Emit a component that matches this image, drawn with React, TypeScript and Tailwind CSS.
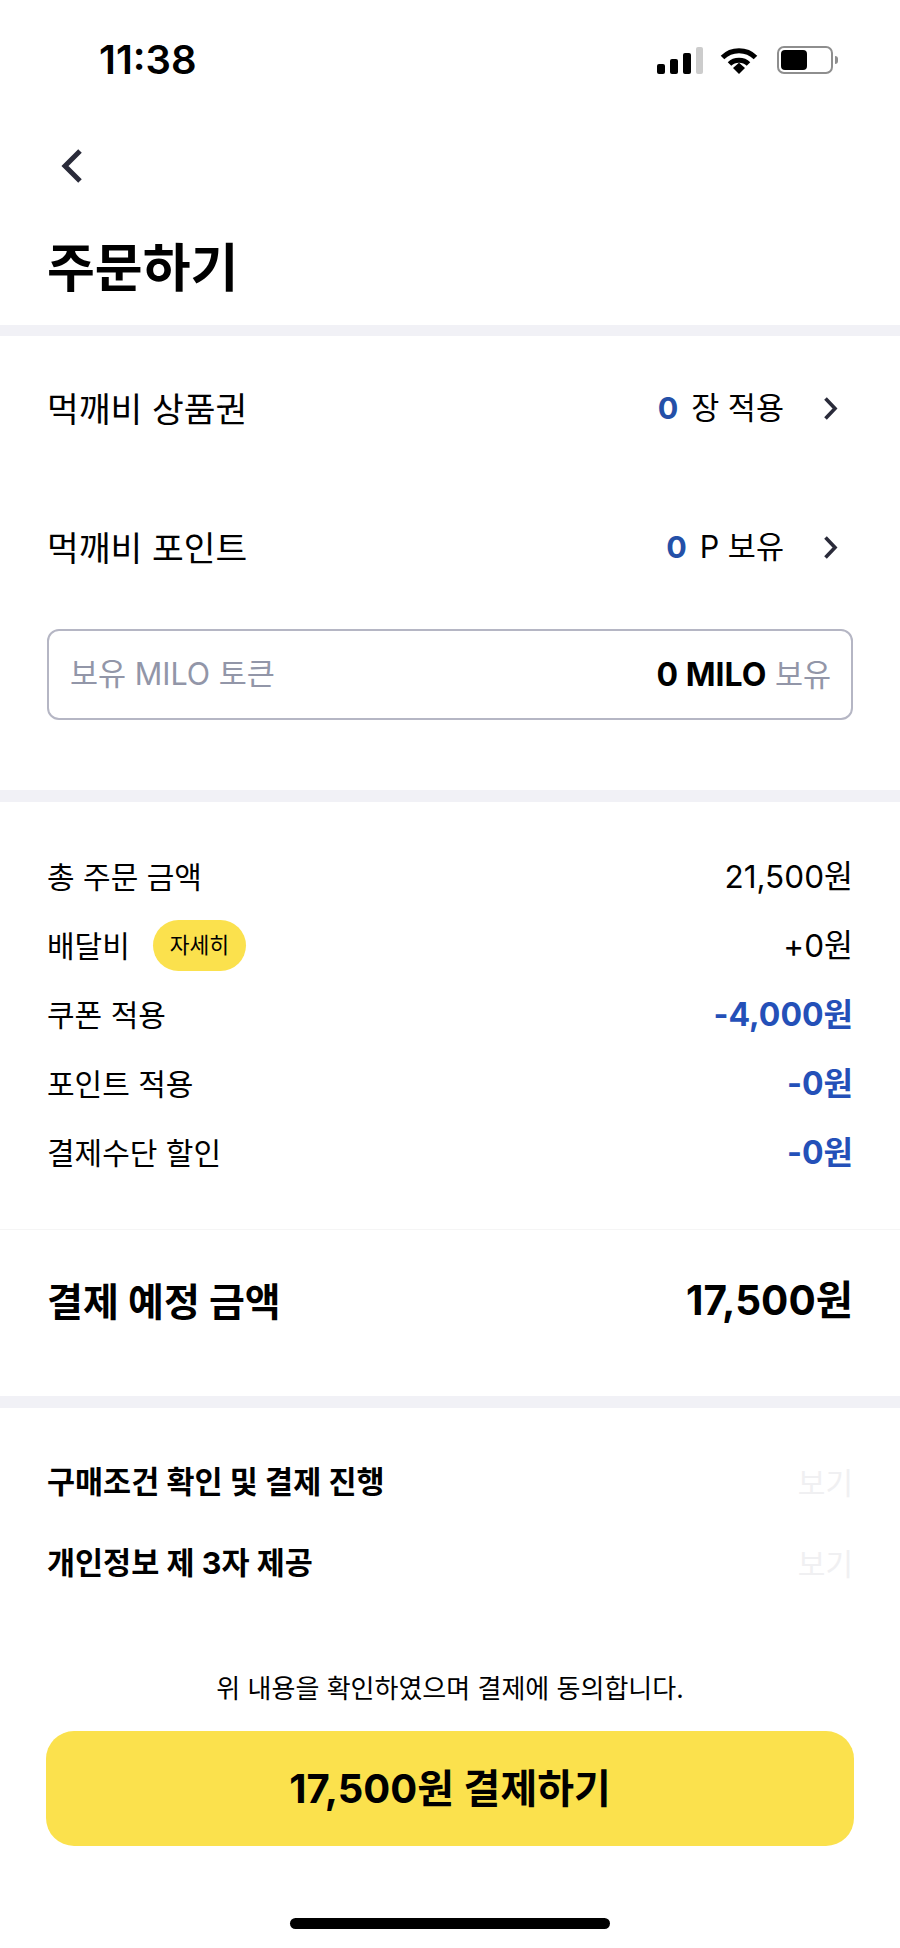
const font = "[font-family:Inter,'Noto_Sans_CJK_KR',sans-serif]"

const fees = [
  { label: '총 주문 금액', value: '21,500원' },
  { label: '배달비', value: '+0원', badge: true },
  { label: '쿠폰 적용', value: '-4,000원', discount: true },
  { label: '포인트 적용', value: '-0원', discount: true },
  { label: '결제수단 할인', value: '-0원', discount: true },
]

function ChevronRight() {
  return (
    <svg width="15" height="25" viewBox="0 0 15 25" fill="none">
      <path d="M2.5 2.5 12 12.5 2.5 22.5" stroke="#2a2b3a" strokeWidth="3.6" />
    </svg>
  )
}

function Divider() {
  return <div className="h-[11px] bg-[#f1f1f6]" />
}

function StatusBar() {
  return (
    <div className="flex h-[120px] items-center justify-between pl-[99px] pr-[62px]">
      <span className="text-[40px] leading-none font-semibold text-black">11:38</span>
      <div className="flex items-center">
        {/* signal */}
        <div className="flex h-[27px] items-end gap-[5px]">
          <div className="h-[10px] w-[8px] rounded-[2px] bg-black" />
          <div className="h-[15px] w-[8px] rounded-[2px] bg-black" />
          <div className="h-[21px] w-[8px] rounded-[2px] bg-black" />
          <div className="h-[27px] w-[7px] rounded-[2px] bg-[#cccccc]" />
        </div>
        {/* wifi */}
        <svg className="mr-[19px] ml-[17px]" width="38" height="27" viewBox="0 0 38 27" fill="none">
          <path d="M2.5 10.5C11.5 1.5 26.5 1.5 35.5 10.5" stroke="#000" strokeWidth="5" />
          <path d="M9.5 17C14.5 12 23.5 12 28.5 17" stroke="#000" strokeWidth="5" />
          <path d="M13 21 19 15.8 25 21 19 27Z" fill="#000" />
        </svg>
        {/* battery */}
        <div className="flex items-center gap-[2px]">
          <div className="h-[28px] w-[56px] rounded-[7px] border-[2px] border-[#8e8e8e] p-[2px]">
            <div className="h-full w-[26px] rounded-[4px] bg-black" />
          </div>
          <div className="h-[8px] w-[3px] rounded-r-full bg-[#8e8e8e]" />
        </div>
      </div>
    </div>
  )
}

export default function App() {
  return (
    <div className={`flex h-[1948px] w-[900px] flex-col bg-white text-black ${font}`}>
      <StatusBar />

      <div className="flex h-[92px] items-center pl-[60px]">
        <svg width="24" height="36" viewBox="0 0 24 36" fill="none">
          <path d="M20 3 5 18 20 33" stroke="#2a2b3a" strokeWidth="5" />
        </svg>
      </div>
      <div className="flex h-[113px] items-center px-[47px]">
        <h1 className="text-[52px] leading-none font-bold">주문하기</h1>
      </div>

      <Divider />

      <section className="px-[47px] pt-[3px]">
        <div className="flex h-[139px] items-center justify-between">
          <span className="mt-[3px] text-[34.5px] leading-none">먹깨비 상품권</span>
          <div className="flex items-center gap-[39px] pr-[15px]">
            <span className="flex items-center gap-[13px] text-[30.5px] leading-none">
              <b className="font-bold text-[#2450a8]">0</b>
              <span>장 적용</span>
            </span>
            <ChevronRight />
          </div>
        </div>
        <div className="flex h-[139px] items-center justify-between">
          <span className="mt-[3px] text-[34.5px] leading-none">먹깨비 포인트</span>
          <div className="flex items-center gap-[39px] pr-[15px]">
            <span className="flex items-center gap-[13px] text-[30.5px] leading-none">
              <b className="font-bold text-[#2450a8]">0</b>
              <span>P 보유</span>
            </span>
            <ChevronRight />
          </div>
        </div>
        <div className="mt-[12px] flex h-[91px] items-center justify-between rounded-[12px] border-2 border-[#b5b6c4] pl-[21px] pr-[20px] text-[30.5px] leading-none">
          <span className="text-[#9296a8]">보유 MILO 토큰</span>
          <span className="text-[#9296a8]">
            <b className="text-[32px] font-bold text-black">0 MILO</b> 보유
          </span>
        </div>
      </section>
      <div className="h-[70px]" />

      <div className="h-[12px] bg-[#f1f1f6]" />

      <section className="px-[47px] pt-[40px] pb-[42px]">
        {fees.map((row) => (
          <div key={row.label} className="flex h-[69px] items-center justify-between text-[30px] leading-none">
            <div className="flex items-center gap-[23px]">
              <span>{row.label}</span>
              {row.badge && (
                <span className="flex h-[51px] w-[93px] items-center justify-center rounded-full bg-[#fbe14d] text-[21.5px] leading-none">
                  자세히
                </span>
              )}
            </div>
            <span className={row.discount ? 'text-[32px] font-bold text-[#2450b8]' : 'text-[31.5px]'}>{row.value}</span>
          </div>
        ))}
      </section>

      <div className="h-px bg-[#f5f5f5]" />

      <section className="flex h-[166px] items-center justify-between px-[47px] pb-[24px] text-[39px] leading-none font-bold">
        <span>결제 예정 금액</span>
        <span className="text-[40.5px]">17,500원</span>
      </section>

      <div className="h-[12px] bg-[#f1f1f6]" />

      <section className="px-[47px] pt-[34px]">
        {['구매조건 확인 및 결제 진행', '개인정보 제 3자 제공'].map((label) => (
          <div key={label} className="flex h-[81px] items-center justify-between">
            <span className="text-[30.5px] leading-none font-bold">{label}</span>
            <span className="text-[30px] leading-none text-[#f0f0f2]">보기</span>
          </div>
        ))}
      </section>

      <p className="mt-[67px] h-[36px] text-center text-[26px] leading-[36px]">
        위 내용을 확인하였으며 결제에 동의합니다.
      </p>

      <button className="mx-[46px] mt-[24px] flex h-[115px] items-center justify-center rounded-[28px] bg-[#fbe14d] text-[40px] leading-none font-bold text-black">
        17,500원 결제하기
      </button>

      <div className="mt-[72px] flex justify-center">
        <div className="h-[11px] w-[320px] rounded-full bg-black" />
      </div>
    </div>
  )
}
